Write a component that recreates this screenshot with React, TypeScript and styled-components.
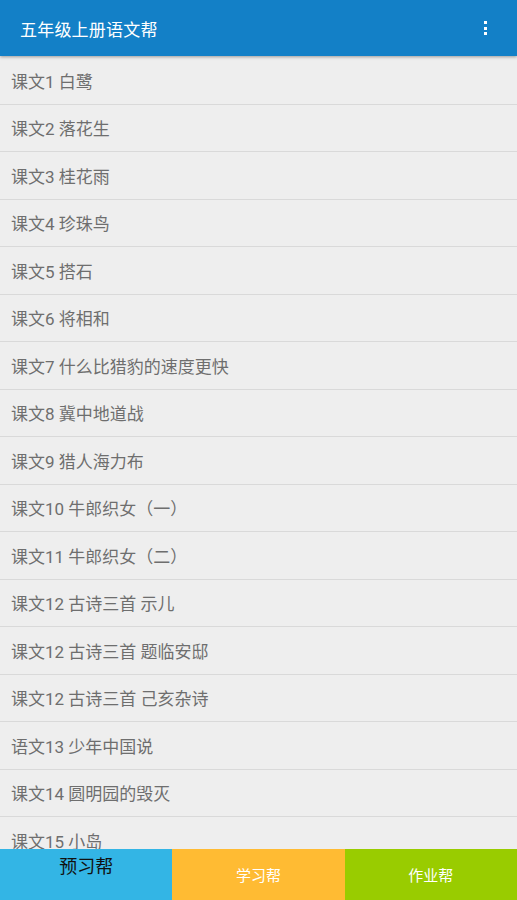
import React from 'react';
import styled, { createGlobalStyle } from 'styled-components';

const lessons = [
  '课文1 白鹭',
  '课文2 落花生',
  '课文3 桂花雨',
  '课文4 珍珠鸟',
  '课文5 搭石',
  '课文6 将相和',
  '课文7 什么比猎豹的速度更快',
  '课文8 冀中地道战',
  '课文9 猎人海力布',
  '课文10 牛郎织女（一）',
  '课文11 牛郎织女（二）',
  '课文12 古诗三首 示儿',
  '课文12 古诗三首 题临安邸',
  '课文12 古诗三首 己亥杂诗',
  '语文13 少年中国说',
  '课文14 圆明园的毁灭',
  '课文15 小岛',
];

const tabs = [
  { label: '预习帮', bg: '#33b5e5', active: true },
  { label: '学习帮', bg: '#ffbb33', active: false },
  { label: '作业帮', bg: '#99cc00', active: false },
];

const GlobalStyle = createGlobalStyle`
  html, body {
    margin: 0;
    padding: 0;
    background: #eeeeee;
  }
  body {
    font-family: Roboto, "Noto Sans CJK SC", sans-serif;
  }
`;

const Screen = styled.div`
  width: 517px;
  height: 900px;
  display: flex;
  flex-direction: column;
  overflow: hidden;
  background: #eeeeee;
`;

const Toolbar = styled.header`
  height: 56px;
  flex-shrink: 0;
  display: flex;
  align-items: center;
  justify-content: space-between;
  padding: 0 30px 0 20px;
  background: #1380c7;
  box-shadow: 0 1px 3px rgba(0, 0, 0, 0.35);
  position: relative;
  z-index: 1;
`;

const Title = styled.h1`
  margin: 0;
  color: #ffffff;
  font-size: 17px;
  font-weight: 400;
  letter-spacing: 0.2px;
`;

const MenuButton = styled.div`
  display: flex;
  flex-direction: column;
  gap: 2.5px;
`;

const Dot = styled.span`
  width: 3px;
  height: 3px;
  background: #ffffff;
`;

const List = styled.ul`
  flex: 1;
  margin: 0;
  padding: 1px 0 0;
  list-style: none;
  overflow: hidden;
`;

const Row = styled.li`
  height: 46.5px;
  display: flex;
  align-items: center;
  padding: 0 11px;
  border-bottom: 1px solid #d9d9d9;
  color: #6e6e6e;
  font-size: 17px;
`;

const TabBar = styled.nav`
  height: 51px;
  flex-shrink: 0;
  display: grid;
  grid-template-columns: repeat(3, 1fr);
`;

const Tab = styled.div<{ $bg: string; $active: boolean }>`
  background: ${p => p.$bg};
  display: flex;
  justify-content: center;
  align-items: ${p => (p.$active ? 'flex-start' : 'center')};
  padding-top: ${p => (p.$active ? '3px' : '0')};
  box-sizing: border-box;
  color: ${p => (p.$active ? '#111111' : '#ffffff')};
  font-size: ${p => (p.$active ? '18px' : '15px')};
`;

export default function App() {
  return (
    <>
      <GlobalStyle />
      <Screen>
        <Toolbar>
          <Title>五年级上册语文帮</Title>
          <MenuButton>
            <Dot />
            <Dot />
            <Dot />
          </MenuButton>
        </Toolbar>
        <List>
          {lessons.map(l => (
            <Row key={l}>{l}</Row>
          ))}
        </List>
        <TabBar>
          {tabs.map(t => (
            <Tab key={t.label} $bg={t.bg} $active={t.active}>
              {t.label}
            </Tab>
          ))}
        </TabBar>
      </Screen>
    </>
  );
}
